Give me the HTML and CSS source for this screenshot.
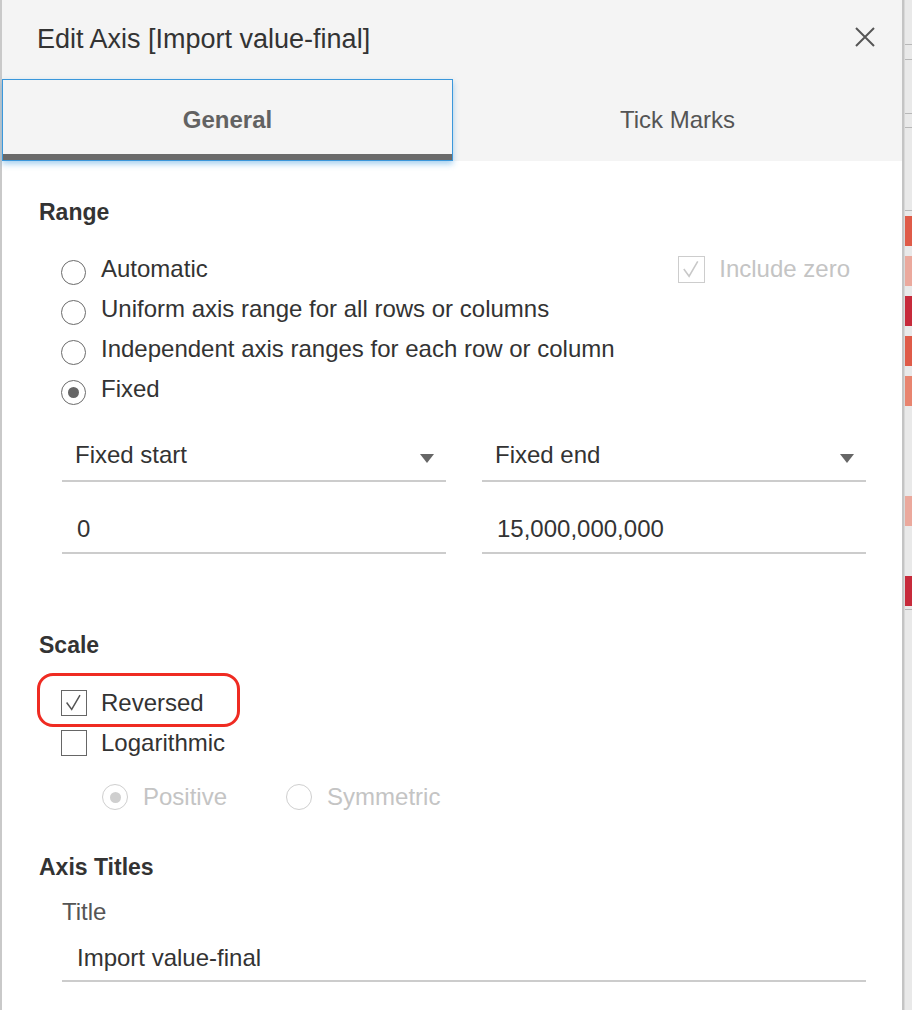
FILE: index.html
```html
<!DOCTYPE html>
<html lang="en">
<head>
<meta charset="utf-8">
<title>Edit Axis</title>
<link rel="stylesheet" href="styles.css">
</head>
<body>
<div class="screen">
  <div class="dialog">
    <div class="header">
      <div class="titlebar">
        <h1 class="title">Edit Axis [Import value-final]</h1>
        <svg class="close" width="20" height="20" viewBox="0 0 20 20"><path d="M1 1 L19 19 M19 1 L1 19" stroke="#555" stroke-width="2" fill="none"/></svg>
      </div>
      <div class="tabs">
        <div class="tab active">General</div>
        <div class="tab">Tick Marks</div>
      </div>
    </div>

    <div class="body">
      <h2 class="section-title">Range</h2>
      <div class="options">
        <div class="option">
          <span class="radio offset"></span><span>Automatic</span>
          <span class="include-zero">
            <span class="checkbox disabled"><svg width="25" height="25" viewBox="0 0 26 26"><path d="M5 12.5 L10.5 20 L19.5 4.5" stroke="#c8c8c8" stroke-width="1.6" fill="none"/></svg></span>
            <span>Include zero</span>
          </span>
        </div>
        <div class="option"><span class="radio offset"></span><span>Uniform axis range for all rows or columns</span></div>
        <div class="option"><span class="radio offset"></span><span>Independent axis ranges for each row or column</span></div>
        <div class="option"><span class="radio offset checked"></span><span>Fixed</span></div>
      </div>

      <div class="fields">
        <div class="select"><span>Fixed start</span><svg class="arrow" width="14" height="9" viewBox="0 0 14 9"><path d="M0 0 H14 L7 9 Z" fill="#666"/></svg></div>
        <div class="select"><span>Fixed end</span><svg class="arrow" width="14" height="9" viewBox="0 0 14 9"><path d="M0 0 H14 L7 9 Z" fill="#666"/></svg></div>
        <div class="input">0</div>
        <div class="input">15,000,000,000</div>
      </div>

      <h2 class="section-title scale-title">Scale</h2>
      <div class="options checks">
        <div class="option reversed">
          <span class="checkbox"><svg width="24" height="24" viewBox="0 0 26 26"><path d="M5 12.5 L10.5 20 L19.5 4.5" stroke="#555" stroke-width="1.6" fill="none"/></svg></span>
          <span>Reversed</span>
          <span class="highlight"></span>
        </div>
        <div class="option"><span class="checkbox"></span><span>Logarithmic</span></div>
      </div>
      <div class="suboptions">
        <div class="option disabled-text"><span class="radio small checked disabled"></span><span>Positive</span></div>
        <div class="option disabled-text"><span class="radio small disabled"></span><span>Symmetric</span></div>
      </div>

      <h2 class="section-title axis-title">Axis Titles</h2>
      <div class="field-label">Title</div>
      <div class="input wide">Import value-final</div>
    </div>
  </div>

  <div class="backdrop">
    <div class="gl g44"></div>
    <div class="gl g14"></div>
    <div class="gl g53"></div>
    <div class="gl g13"></div>
    <div class="gl g82"></div>
    <div class="bar c1 b5"></div>
    <div class="bar c2 b10"></div>
    <div class="bar c3 b10"></div>
    <div class="bar c1 b10"></div>
    <div class="bar c4 b10"></div>
    <div class="bar c2 b90"></div>
    <div class="bar c3 b50"></div>
    <div class="gl g3"></div>
  </div>
</div>
</body>
</html>
```

FILE: styles.css
```css
* { box-sizing: border-box; }

body {
  margin: 0;
  font-family: "Liberation Sans", Arial, sans-serif;
  color: #333;
  overflow: hidden;
}

.screen {
  display: flex;
  width: 912px;
  height: 1010px;
  overflow: hidden;
}

.dialog {
  flex: none;
  width: 904px;
  background: #fff;
  border-left: 2px solid #c9c9c9;
  border-right: 2px solid #c4c4c4;
}

/* header */
.header { background: #f4f4f4; }

.titlebar {
  height: 79px;
  display: flex;
  align-items: center;
  justify-content: space-between;
  padding: 0 27px 0 35px;
}

.title {
  margin: 0;
  font-size: 27px;
  font-weight: normal;
  line-height: 79px;
  color: #333;
}

.close { margin-bottom: 5px; }

.tabs {
  display: flex;
  height: 82px;
}

.tab {
  flex: 1;
  display: flex;
  align-items: center;
  justify-content: center;
  font-size: 24px;
  color: #555;
}

.tab.active {
  position: relative;
  z-index: 1;
  font-weight: bold;
  color: #626262;
  background: #f4f4f4;
  border: 1px solid #3a97db;
  box-shadow: inset 0 -6px 0 #6a6a6a, 0 3px 6px rgba(58, 151, 219, 0.45);
}

/* body */
.body {
  padding: 36px 36px 0 37px;
}

.section-title {
  margin: 0;
  font-size: 23px;
  font-weight: bold;
  line-height: 30px;
  color: #333;
}

.options {
  margin: 22px 0 0 22px;
}

.option {
  display: flex;
  align-items: center;
  gap: 15px;
  height: 40px;
  font-size: 24px;
  color: #333;
}

.radio {
  flex: none;
  width: 25px;
  height: 25px;
  border: 1.5px solid #6b6b6b;
  border-radius: 50%;
  display: flex;
  align-items: center;
  justify-content: center;
}

.radio.offset { margin-top: 6px; }

.radio.checked::after {
  content: "";
  width: 11px;
  height: 11px;
  border-radius: 50%;
  background: #666;
}

.radio.small { width: 26px; height: 26px; }

.radio.disabled { border-color: #cfcfcf; }
.radio.disabled.checked::after { background: #cfcfcf; }

.include-zero {
  margin-left: auto;
  margin-right: 16px;
  display: flex;
  align-items: center;
  gap: 14px;
  color: #c4c4c4;
}

.checkbox {
  flex: none;
  width: 26px;
  height: 26px;
  border: 1.5px solid #666;
  display: flex;
  align-items: center;
  justify-content: center;
}

.checkbox.disabled {
  width: 27px;
  height: 27px;
  border-color: #cdcdcd;
}

.checks .option { gap: 14px; }

/* fields */
.fields {
  display: grid;
  grid-template-columns: 384px 384px;
  column-gap: 36px;
  row-gap: 32px;
  margin: 31px 0 0 23px;
}

.select {
  display: flex;
  justify-content: space-between;
  align-items: center;
  padding: 0 12px 10px 13px;
  line-height: 30px;
  font-size: 24px;
  color: #333;
  border-bottom: 2px solid #cccccc;
}

.arrow { margin-top: 7px; }

.input {
  padding: 0 15px 8px;
  line-height: 30px;
  font-size: 24px;
  color: #333;
  border-bottom: 2px solid #cccccc;
}

.scale-title { margin-top: 76px; }

.checks { margin-top: 23px; }

.reversed { position: relative; }

.highlight {
  position: absolute;
  left: -24px;
  top: -10px;
  width: 203px;
  height: 54px;
  border: 3px solid #ef2b22;
  border-radius: 16px;
}

.suboptions {
  display: flex;
  gap: 59px;
  margin: 14px 0 0 63px;
}

.disabled-text { color: #c4c4c4; }

.axis-title { margin-top: 35px; }

.field-label {
  margin: 15px 0 0 23px;
  font-size: 24px;
  line-height: 30px;
  color: #555;
}

.input.wide {
  margin: 16px 0 0 23px;
  padding-bottom: 7px;
}

/* backdrop strip (chart behind the dialog) */
.backdrop {
  flex: 1;
  display: flex;
  flex-direction: column;
  background: #e9e9e9;
  border-left: 1px solid #d8d8d8;
}

.gl { height: 1px; background: #b8b8b8; flex: none; }
.bar { height: 30px; flex: none; }

.g44 { margin-top: 44px; }
.g14 { margin-top: 14px; }
.g53 { margin-top: 53px; }
.g13 { margin-top: 13px; }
.g82 { margin-top: 82px; }
.g3 { margin-top: 3px; }
.b5 { margin-top: 5px; }
.b10 { margin-top: 10px; }
.b50 { margin-top: 50px; }
.b90 { margin-top: 90px; }

.c1 { background: #df5b48; }
.c2 { background: #eba99d; }
.c3 { background: #c72a3b; }
.c4 { background: #e8846f; }
```
